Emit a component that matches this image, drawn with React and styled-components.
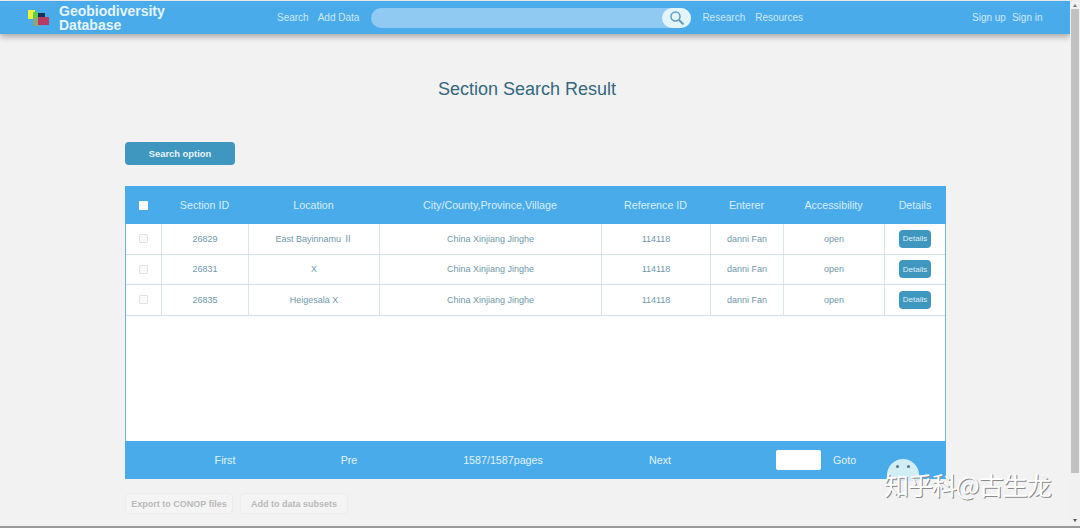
import React from "react";
import styled, { createGlobalStyle } from "styled-components";

const GlobalStyle = createGlobalStyle`
  html, body {
    margin: 0;
    height: 100%;
    overflow: hidden;
    background: #f2f2f2;
    font-family: "Liberation Sans", "Noto Sans CJK SC", Arial, sans-serif;
  }
`;

const Frame = styled.div`
  width: 1080px;
  height: 528px;
  display: flex;
  position: relative;
  overflow: hidden;
  border-bottom: 2px solid #9a9a9a;
  box-sizing: border-box;
`;

const Page = styled.div`
  width: 1070px;
  display: flex;
  flex-direction: column;
`;

const Scrollbar = styled.div`
  width: 10px;
  background: #f1f1f1;
  display: flex;
  flex-direction: column;
  align-items: center;
`;

const ScrollThumb = styled.div`
  width: 8px;
  height: 464px;
  margin-top: 2px;
  background: #c1c1c1;
`;

const ScrollArrow = styled.div`
  width: 0;
  height: 0;
  border-left: 2px solid transparent;
  border-right: 2px solid transparent;
  border-top: ${({ $up }) => ($up ? "none" : "3px solid #555")};
  border-bottom: ${({ $up }) => ($up ? "3px solid #777" : "none")};
  margin-top: ${({ $up }) => ($up ? 4 : 46)}px;
`;

const TopBar = styled.header`
  height: 33px;
  margin-top: 1px;
  background: #4aabea;
  box-shadow: 0 3px 6px rgba(0, 0, 0, 0.3);
  display: flex;
  align-items: center;
  padding-left: 27px;
  color: #cde8f9;
  font-size: 10px;
`;

const Logo = styled.svg`
  width: 22px;
  height: 18px;
  margin-right: 10px;
  filter: blur(0.5px);
`;

const Brand = styled.div`
  width: 218px;
  color: #e4f5fd;
  font-size: 14px;
  font-weight: 700;
  line-height: 14px;
`;

const NavLink = styled.span`
  margin-right: ${({ $gap }) => $gap}px;
  white-space: nowrap;
`;

const SearchBox = styled.div`
  width: 320px;
  height: 20px;
  margin-right: 11px;
  border-radius: 10px;
  background: #90c9f1;
  display: flex;
  justify-content: flex-end;
`;

const SearchButton = styled.div`
  width: 29px;
  height: 20px;
  border-radius: 10px;
  background: #e4f4fb;
  display: flex;
  align-items: center;
  justify-content: center;
`;

const AuthLinks = styled.div`
  margin-left: 169px;
  display: flex;
  gap: 6px;
`;

const Title = styled.h1`
  margin: 43px 0 0;
  height: 24px;
  padding-right: 16px;
  color: #33687f;
  font-size: 18px;
  line-height: 24px;
  font-weight: 400;
  text-align: center;
`;

const Content = styled.main`
  margin: 41px 0 0 125px;
  width: 821px;
`;

const OptionButton = styled.button`
  display: block;
  width: 110px;
  height: 23px;
  padding: 0;
  border: none;
  border-radius: 4px;
  background: #3f96be;
  color: #e8f4fa;
  font: 700 9.4px "Liberation Sans", Arial, sans-serif;
`;

const ResultPanel = styled.section`
  margin-top: 21px;
  height: 293px;
  background: #fff;
  display: flex;
  flex-direction: column;
  box-sizing: border-box;
  border-left: 1px solid #6fb2d4;
  border-right: 1px solid #6fb2d4;
`;

const TableArea = styled.div`
  flex: 1;
`;

const Row = styled.div`
  display: grid;
  grid-template-columns: 36px 87px 131px 222px 109px 73px 101px 1fr;
  height: ${({ $head }) => ($head ? 38 : 30.6)}px;
  margin: ${({ $head }) => ($head ? "0 -1px" : "0")};
  background: ${({ $head }) => ($head ? "#4aabea" : "#fff")};
  color: ${({ $head }) => ($head ? "#d8eefb" : "#6f98aa")};
  font-size: ${({ $head }) => ($head ? 10.7 : 9)}px;
  box-sizing: border-box;
  border-bottom: ${({ $head }) => ($head ? "none" : "1px solid #cfe2e8")};
`;

const Cell = styled.div`
  display: flex;
  align-items: center;
  justify-content: center;
  white-space: nowrap;
  border-right: ${({ $head }) => ($head ? "none" : "1px solid #d9e5ea")};

  &:last-child {
    border-right: none;
  }
`;

const Check = styled.span`
  width: 9px;
  height: 9px;
  box-sizing: border-box;
  border-radius: 1px;
  background: ${({ $head }) => ($head ? "#fff" : "#fafafa")};
  border: ${({ $head }) => ($head ? "none" : "1px solid #dfe3e5")};
`;

const DetailsButton = styled.button`
  width: 32px;
  height: 18px;
  padding: 0;
  border: none;
  border-radius: 4px;
  background: #3f96be;
  color: #dff0f8;
  font: 400 8px "Liberation Sans", Arial, sans-serif;
`;

const Pager = styled.div`
  height: 38px;
  margin: 0 -1px;
  background: #4aabea;
  color: #e0f3fc;
  font-size: 10.7px;
  display: grid;
  grid-template-columns: 200px 48px 260px 54px 134px 47px 1fr;
  align-items: center;
  justify-items: center;
`;

const GotoInput = styled.div`
  justify-self: end;
  width: 45px;
  height: 20px;
  background: #fff;
  border-radius: 2px;
`;

const Actions = styled.div`
  margin-top: 14px;
  display: flex;
  gap: 7px;
`;

const GhostButton = styled.button`
  width: ${({ $w }) => $w}px;
  height: 21px;
  padding: 0;
  background: #f4f4f4;
  border: 1px solid #ececec;
  border-radius: 4px;
  color: #b9b9b9;
  font: 700 9px "Liberation Sans", Arial, sans-serif;
`;

const Mascot = styled.div`
  position: absolute;
  left: 887px;
  top: 459px;
  width: 32px;
  height: 22px;
  overflow: hidden;
  background: #d3edf5;
  border-radius: 16px 16px 0 0;
`;

const MascotEye = styled.span`
  position: absolute;
  top: 6px;
  left: ${({ $x }) => $x}px;
  width: 3px;
  height: 3px;
  border-radius: 50%;
  background: #56788a;
`;

const Watermark = styled.div`
  position: absolute;
  left: ${({ $x }) => $x}px;
  top: ${({ $y }) => $y}px;
  color: ${({ $shade }) => ($shade ? "#8a8a8a" : "#fff")};
  font: 400 25px "Noto Sans CJK SC", "Liberation Sans", sans-serif;
  line-height: 30px;
  white-space: nowrap;
  letter-spacing: -1px;
`;

const columns = ["Section ID", "Location", "City/County,Province,Village", "Reference ID", "Enterer", "Accessibility", "Details"];

const rows = [
  { id: "26829", location: "East Bayinnamu Ⅱ" },
  { id: "26831", location: "X" },
  { id: "26835", location: "Heigesala  X" },
];

function SiteLogo() {
  return (
    <Logo viewBox="0 0 22 18">
      <rect x="1" y="1" width="7" height="9" fill="#eef03a" />
      <rect x="6" y="3" width="5" height="6" fill="#5fd04a" />
      <rect x="6" y="9" width="7" height="8" fill="#8aa77e" />
      <rect x="11" y="4" width="7" height="6" fill="#12305a" />
      <rect x="11" y="8" width="11" height="8" fill="#b83a62" />
    </Logo>
  );
}

export default function App() {
  return (
    <Frame>
      <GlobalStyle />
      <Page>
        <TopBar>
          <SiteLogo />
          <Brand>
            Geobiodiversity
            <br />
            Database
          </Brand>
          <NavLink $gap={9}>Search</NavLink>
          <NavLink $gap={12}>Add Data</NavLink>
          <SearchBox>
            <SearchButton>
              <svg width="16" height="16" viewBox="0 0 16 16" fill="none" stroke="#5f9dba">
                <circle cx="6.5" cy="6.5" r="4.5" strokeWidth="1.5" />
                <path d="M10 10l4.5 4.5" strokeWidth="2" />
              </svg>
            </SearchButton>
          </SearchBox>
          <NavLink $gap={10}>Research</NavLink>
          <NavLink $gap={0}>Resources</NavLink>
          <AuthLinks>
            <span>Sign up</span>
            <span>Sign in</span>
          </AuthLinks>
        </TopBar>

        <Title>Section Search Result</Title>

        <Content>
          <OptionButton>Search option</OptionButton>
          <ResultPanel>
            <TableArea>
              <Row $head>
                <Cell $head>
                  <Check $head />
                </Cell>
                {columns.map((col) => (
                  <Cell $head key={col}>
                    {col}
                  </Cell>
                ))}
              </Row>
              {rows.map((row) => (
                <Row key={row.id}>
                  <Cell>
                    <Check />
                  </Cell>
                  <Cell>{row.id}</Cell>
                  <Cell>{row.location}</Cell>
                  <Cell>China Xinjiang Jinghe</Cell>
                  <Cell>114118</Cell>
                  <Cell>danni Fan</Cell>
                  <Cell>open</Cell>
                  <Cell>
                    <DetailsButton>Details</DetailsButton>
                  </Cell>
                </Row>
              ))}
            </TableArea>
            <Pager>
              <span>First</span>
              <span>Pre</span>
              <span>1587/1587pages</span>
              <span>Next</span>
              <GotoInput />
              <span>Goto</span>
            </Pager>
          </ResultPanel>
          <Actions>
            <GhostButton $w={108}>Export to CONOP files</GhostButton>
            <GhostButton $w={108}>Add to data subsets</GhostButton>
          </Actions>
        </Content>
      </Page>
      <Scrollbar>
        <ScrollArrow $up />
        <ScrollThumb />
        <ScrollArrow />
      </Scrollbar>
      <Mascot>
        <MascotEye $x={9} />
        <MascotEye $x={20} />
      </Mascot>
      <Watermark $shade $x={885} $y={470}>知乎科@古生龙</Watermark>
      <Watermark $x={884} $y={469}>知乎科@古生龙</Watermark>
    </Frame>
  );
}
